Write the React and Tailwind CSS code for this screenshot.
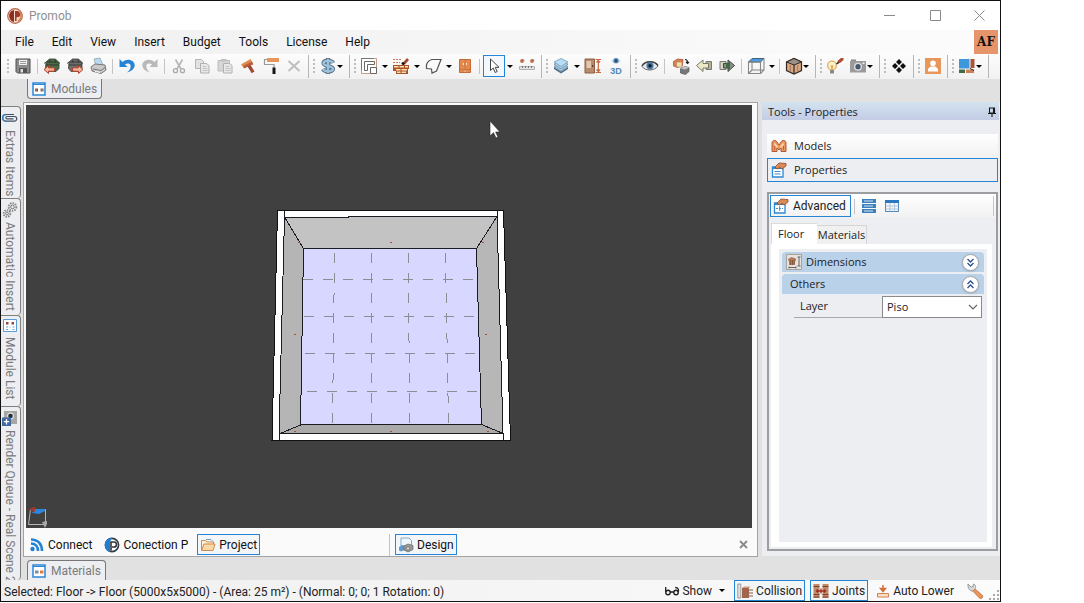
import React from "react";

/* ---------- icons ---------- */

function Svg({ size = "size-[18px]", box = 18, children, ...rest }) {
  return (
    <svg className={`${size} shrink-0`} viewBox={`0 0 ${box} ${box}`} fill="none" aria-hidden="true" {...rest}>
      {children}
    </svg>
  );
}

const Logo = () => (
  <Svg size="size-4" box={16}>
    <circle cx="8" cy="8" r="7.3" fill="#f6d9c6" stroke="#b8654a" strokeWidth="1.2" />
    <path d="M7 2C3 3 1.800 6 2.300 9c.4 3 2.500 4.700 4.700 5z" fill="#8c2f22" />
    <path d="M8 3h2.500c4 .5 4 6 0 6.300H9.500V13H8z" fill="#9a3c2b" />
    <path d="M12.500 3.500c2.500 3 2 7.500-1.500 9.500" stroke="#d98352" strokeWidth="1.500" />
  </Svg>
);
const Save = () => (
  <Svg>
    <path d="M2 2h14v14H3.500L2 14.500z" fill="#8b8b8b" stroke="#4f4f4f" />
    <path d="M4.500 2.500h9v6h-9z" fill="#efefef" stroke="#666" strokeWidth=".6" />
    <path d="M6 4.500h6M6 6.500h6" stroke="#999" />
    <path d="M5 11h8v5H5z" fill="#555" />
    <path d="M6.500 12h2.500v3.500H6.500z" fill="#ddd" />
  </Svg>
);
const Chest = ({ tone, dir }) => (
  <Svg>
    <path d="M3 5l3.500-3h6L16 5.500v6l-3 3H5l-2.500-3z" fill={tone} stroke="#3a403a" strokeWidth=".8" />
    <path d="M1 6.500l2-1.500M17 6.500L15 5M4 5h11M7 2.500l-.5 3M12 2.500l.5 3M3 8h13" stroke="#2a302a" strokeWidth=".8" />
    {dir === "left" ? (
      <path d="M1 12.500l4.500-4v2.300h6v3.400h-6v2.300z" fill="#f3b69a" stroke="#b2402a" />
    ) : (
      <path d="M17 12.500l-4.500-4v2.300h-6v3.400h6v2.300z" fill="#f3b69a" stroke="#b2402a" />
    )}
  </Svg>
);
const Printer = () => (
  <Svg>
    <path d="M5 2l6-1 3 7-7 1z" fill="#b9d9f3" stroke="#8aa" strokeWidth=".8" />
    <path d="M2 10l4-3 10 1 1 5-5 3.500L3 14z" fill="#c9c9c9" stroke="#777" />
    <path d="M4 12l8 1.500 4-3" stroke="#777" />
    <path d="M6 14.500l5 .8" stroke="#fff" />
  </Svg>
);
const Undo = () => (
  <Svg>
    <path d="M1.500 2v8h8L7 7.600C9 5.900 12 6.200 12.600 8.500c.5 2.500-1 5-3.600 7 4-.8 7.300-3.500 7.700-7C17 3.500 9.500.5 4.500 5z" fill="#2484d6" />
  </Svg>
);
const Redo = () => (
  <Svg>
    <path d="M16.500 2v8h-8L11 7.600C9 5.900 6 6.200 5.400 8.500c-.5 2.500 1 5 3.600 7-4-.8-7.300-3.500-7.700-7C1 3.500 8.500.5 13.500 5z" fill="#b9b9b9" />
  </Svg>
);
const Cut = () => (
  <Svg>
    <path d="M5.500 2.500L11 12M12.500 2.500L7 12" stroke="#b5b5b5" strokeWidth="1.600" />
    <circle cx="5.500" cy="13.700" r="2" stroke="#aaa" strokeWidth="1.300" />
    <circle cx="12.500" cy="13.700" r="2" stroke="#aaa" strokeWidth="1.300" />
  </Svg>
);
const Copy = () => (
  <Svg>
    <path d="M2.500 2.500h6l2 2v7h-8z" fill="#e2e2e2" stroke="#b5b5b5" />
    <path d="M7.500 6.500h6l2.500 2v7.500H7.500z" fill="#e8e8e8" stroke="#b0b0b0" />
    <path d="M9.500 9.500h4M9.500 11.500h5M9.500 13.500h5" stroke="#c4c4c4" />
  </Svg>
);
const Paste = () => (
  <Svg>
    <path d="M2 3.500h11.500V14H2z" fill="#d6d6d6" stroke="#bbb" />
    <path d="M5 2h5.500v2.500H5z" fill="#c2c2c2" />
    <path d="M7.500 6.500h6l2.500 2v7.500H7.500z" fill="#e8e8e8" stroke="#b0b0b0" />
    <path d="M9.500 9.500h4M9.500 11.500h5M9.500 13.500h5" stroke="#c4c4c4" />
  </Svg>
);
const Brush = () => (
  <Svg>
    <path d="M2 7.500L11.500 2l2.800 5.300L5 11z" fill="#e08a50" />
    <path d="M4 9l9-4.500 1.300 2.800L5 11.500z" fill="#b9603a" />
    <path d="M8.500 9.500l3-1.500 4 6.500-2.800 1.800z" fill="#9c4a30" />
  </Svg>
);
const Roller = () => (
  <Svg>
    <path d="M5 1h12v4H5z" fill="#e8965a" />
    <path d="M5 2.500H2.500v5H12V11" stroke="#9a9a9a" strokeWidth="1.200" />
    <path d="M10.500 10.500h3V17h-3z" fill="#151515" />
  </Svg>
);
const Cross = () => (
  <Svg>
    <path d="M3.500 4l11 10M14.500 4L3.500 14" stroke="#bfbfbf" strokeWidth="2" />
  </Svg>
);
const Dollar = () => (
  <Svg>
    <path d="M9 1v16" stroke="#5a7183" strokeWidth="4.400" />
    <path d="M14 6C13 3.200 4.500 3 4.500 6.200S14 8.800 14 12 5.500 15 4 12" stroke="#5a7183" strokeWidth="4.200" />
    <path d="M9 1.800v14.400" stroke="#9cc3e0" strokeWidth="2.400" />
    <path d="M14 6C13 3.200 4.500 3 4.500 6.200S14 8.800 14 12 5.500 15 4 12" stroke="#9cc3e0" strokeWidth="2.400" />
  </Svg>
);
const Walls = () => (
  <Svg>
    <path d="M1.500 1.500h15v15h-15z" fill="#fff" stroke="#c99a80" />
    <path d="M1.500 13V1.500h12" stroke="#777" />
    <path d="M4.500 13.500v-9h10v3H7.500v6z" fill="#fff" stroke="#666" />
    <path d="M10.500 10.500h6v6h-6z" fill="#fff" stroke="#666" />
  </Svg>
);
const Bricks = () => (
  <Svg>
    <path d="M1 8h16v4h-1v5H4v-3H1z" fill="#a9532d" />
    <path d="M2 9h4.500v1.500H2zM7.500 9H12v1.500H7.500zM13 9h3v1.500h-3zM4 12h4.500v1.500H4zM9.500 12H15v1.500H9.500zM5 14.500h3.500V16H5zM9.500 14.500H14V16H9.500z" fill="#ffe0ac" />
    <path d="M1 2.500h9M1 5.500h7" stroke="#c67a55" strokeDasharray="2 1" strokeWidth="1.200" />
    <path d="M11 8V5.500L15 1l2 2-4 4.500z" fill="#a34835" />
    <path d="M9.500 6.500h3M11 5v3" stroke="#111" strokeWidth="1.300" />
  </Svg>
);
const Shape = () => (
  <Svg>
    <path d="M8 2.500h9L12.500 14l-4.500 2-.5-4-5-.5C1.500 7 4 3.500 8 2.500z" fill="#fafafa" stroke="#555" strokeWidth="1.200" />
  </Svg>
);
const Cabinet = () => (
  <Svg>
    <path d="M3.500 2.500h11v13h-11z" fill="#e28a52" stroke="#c56a35" />
    <path d="M9 3v9M4 12.500h10" stroke="#c87038" strokeWidth=".8" />
    <path d="M7.500 6v2M10.500 6v2M9 13.700v1" stroke="#ffe9cc" />
  </Svg>
);
const Pointer = () => (
  <Svg>
    <path d="M5.500 2v11.500l2.700-2.500 2 4.500 2-1-2-4.200h3.800z" fill="#fff" stroke="#444" />
  </Svg>
);
const Measure = () => (
  <Svg>
    <circle cx="4" cy="4" r="1.900" fill="#c46a45" />
    <circle cx="14" cy="4" r="1.900" fill="#c46a45" />
    <path d="M5 2.500l1 1M15 2.500l1 1" stroke="#444" />
    <path d="M1.500 9.500h15v3h-15z" fill="#e3e3e3" stroke="#b0b0b0" />
    <path d="M4.500 9v2M7.500 9v2M10.500 9v2M13.500 9v2" stroke="#777" />
  </Svg>
);
const Layers = () => (
  <Svg>
    <path d="M2 12l7 4.500L16 12v-2l-7 4.500L2 10z" fill="#4f6f88" />
    <path d="M2 9.500L9 14l7-4.500-7-4z" fill="#a9cde6" stroke="#5d7f99" strokeWidth=".7" />
    <path d="M2 7.200l7 4.500 7-4.500-7-4z" fill="#b5d8ef" stroke="#5d7f99" strokeWidth=".7" />
    <path d="M2 5l7-3.500L16 5 9 9.500z" fill="#b9def7" stroke="#6f97b3" strokeWidth=".8" />
  </Svg>
);
const DoorSize = () => (
  <Svg>
    <path d="M1 2h9.500v14H1z" fill="#b88b6e" stroke="#8b5e45" />
    <path d="M2.500 4H7v7H2.500z" fill="#e3c8b0" />
    <path d="M8 8h1.200v2H8z" fill="#5c3a28" />
    <path d="M11.500 2.500h5.500M11.500 15.500h5.500M14.300 3v12M12.500 5.500l1.800-2 1.800 2M12.500 12.500l1.800 2 1.800-2" stroke="#c9683f" strokeWidth="1.200" />
  </Svg>
);
const View3D = () => (
  <Svg>
    <path d="M4 4C6 1 12 1 14 4 12 7 6 7 4 4z" fill="#cfe3f3" />
    <circle cx="9" cy="3.700" r="2.600" fill="#4c7fa8" />
    <circle cx="9" cy="3.700" r="1" fill="#16324a" />
    <text x="9" y="17" textAnchor="middle" fontSize="9" fontWeight="700" fontFamily="Liberation Sans, sans-serif" fill="#4d88b8">3D</text>
  </Svg>
);
const Eye = () => (
  <Svg>
    <path d="M1 9.500C4 3.500 13.500 3.500 17 9c-3.500 5-12.500 5.500-16 .5z" fill="#e8ecef" stroke="#666" />
    <path d="M1 9C4 3.500 13.500 3.500 17 8.500" stroke="#444" strokeWidth="1.500" />
    <circle cx="9" cy="8.800" r="3.600" fill="#4877a3" />
    <circle cx="9" cy="8.800" r="1.700" fill="#101c2b" />
  </Svg>
);
const Boxes = () => (
  <Svg>
    <path d="M1.500 4.500l4-2.500 5.500.5-.5 6-5 2-4-1.500z" fill="#d9814f" stroke="#9a4d2c" strokeWidth=".7" />
    <path d="M4.500 5h5.500v5H4.500z" fill="#f4dcb6" stroke="#b27a44" strokeWidth=".6" />
    <path d="M8.500 11.500l4.500-2 4 1v4l-3.500 3-5-1.500z" fill="#777" stroke="#555" strokeWidth=".7" />
    <path d="M8.500 11.500l4.500 1 4-2-4-1z" fill="#c4c4c4" />
    <path d="M13 2.500c2 0 2.500 1 2.500 3M14 5l1.500 1.500L17 5" stroke="#222" strokeWidth="1.200" />
  </Svg>
);
const ArrowBox = ({ dir }) =>
  dir === "left" ? (
    <Svg>
      <path d="M11 4.500h5.500v8H11z" fill="#b7b28f" stroke="#777" />
      <path d="M1.500 8.500L8 3v3.500h5.500v4.500H8v3.500z" fill="#eceac6" stroke="#77766a" />
    </Svg>
  ) : (
    <Svg>
      <path d="M2 4.500h6v8H2z" fill="#d6d6c4" stroke="#777" />
      <path d="M16.500 8.500L10 3v3.500H5.500v4.500H10v3.500z" fill="#8a8f88" stroke="#444" />
      <path d="M8 6l4-1v7l-2 1.500V11H8z" fill="#3f6b42" />
    </Svg>
  );
const WireCube = () => (
  <Svg>
    <path d="M5 1.500h12L13.500 5H1.500z" fill="#4a9be2" stroke="#47617a" />
    <path d="M1.500 5h12v11.500h-12zM17 2v11l-3.500 3.500M5 5v8h12M5 13l-3.500 3.500" stroke="#888" strokeWidth="1.100" />
  </Svg>
);
const WoodCube = () => (
  <Svg>
    <path d="M1.500 5L9 1.500 16.500 5v8.500L9 17l-7.500-3.500z" fill="#d9a983" stroke="#332b26" strokeWidth="1.200" />
    <path d="M1.500 5L9 8l7.500-3L9 1.500z" fill="#9c9189" stroke="#332b26" />
    <path d="M9 8v9" stroke="#332b26" strokeWidth="1.200" />
    <path d="M5.300 8v6M12.700 8v6" stroke="#a57453" />
  </Svg>
);
const Bulb = () => (
  <Svg>
    <circle cx="6" cy="8.500" r="4.300" fill="#fff3cf" stroke="#dcae5c" strokeWidth="1.300" />
    <path d="M4 13h4v3.500H4z" fill="#8a8a8a" />
    <path d="M5 8l1 4 1-4" stroke="#d9a24a" />
    <path d="M11 6.500l1-3L15 1h2.500v2L14 6z" fill="#ad4a32" />
    <path d="M10.500 7l2-1.500" stroke="#222" strokeWidth="1.500" />
  </Svg>
);
const Camera = () => (
  <Svg>
    <path d="M1 4h16v11.500H1z" fill="#9b9b9b" />
    <path d="M2 2.500h5V4H2z" fill="#888" />
    <circle cx="9" cy="9.700" r="4" fill="#d9dde0" />
    <circle cx="9" cy="9.700" r="2.600" fill="#44576b" />
    <path d="M13.500 5.500h2V7h-2z" fill="#eee" />
  </Svg>
);
const Diamonds = () => (
  <Svg>
    <path d="M9 2l3 3-3 3-3-3zM9 10l3 3-3 3-3-3zM5 6l3 3-3 3-3-3zM13 6l3 3-3 3-3-3z" fill="#111" />
  </Svg>
);
const UserTile = () => (
  <Svg>
    <path d="M1 1h16v16H1z" fill="#e8965a" />
    <circle cx="9" cy="6.300" r="2.800" fill="#fff" />
    <path d="M4 14.500V12l2.500-2.500h5L14 12v2.500z" fill="#fff" />
  </Svg>
);
const Blocks = () => (
  <Svg>
    <path d="M1 2h10.500v9.500H1z" fill="#3e96dc" />
    <path d="M12.500 2h4v9h-4z" fill="#a7553c" />
    <path d="M1 12.500h6V16H1z" fill="#3e6b46" />
    <path d="M8 12.500h8V16H8z" fill="#d17f57" />
    <path d="M12 11.500l4 2" stroke="#222" />
  </Svg>
);
const Clip = () => (
  <Svg size="size-4" box={16}>
    <path d="M12 4.500H4a3.300 3.300 0 000 6.600h8.500a2.300 2.300 0 000-4.600H5a1.100 1.100 0 000 2.300h6.500" stroke="#3f4f63" strokeWidth="1.200" />
    <path d="M4 4.500a3.300 3.300 0 000 6.600" stroke="#3d86c8" strokeWidth="1.400" />
  </Svg>
);
const Gears = () => (
  <Svg size="size-4" box={16}>
    <circle cx="10.500" cy="5" r="3.800" stroke="#8a8a8a" strokeWidth="2" strokeDasharray="1.500 1" />
    <circle cx="10.500" cy="5" r="1.800" stroke="#777" />
    <circle cx="5" cy="11.500" r="3.300" stroke="#8a8a8a" strokeWidth="2" strokeDasharray="1.500 1" />
    <circle cx="5" cy="11.500" r="1.400" stroke="#777" />
  </Svg>
);
const ModuleTile = () => (
  <Svg size="size-[14px]" box={14}>
    <path d="M1 1h12v12H1z" fill="#fff" stroke="#2d86d6" strokeWidth="1.500" />
    <path d="M1 2.500h12" stroke="#2d86d6" />
    <path d="M3 6.500h2v3H3zM8.500 6.500h2v3h-2z" fill="#9b6a4e" />
    <path d="M5 6.500h1v3H5zM10.500 6.500h1v3h-1z" fill="#555" />
  </Svg>
);
const ListTile = () => (
  <Svg size="size-[14px]" box={14}>
    <path d="M.5.5h13v12H.5z" fill="#fff" stroke="#5a9bd3" />
    <path d="M3 3h2.500v2.500H3zM8.500 3H11v2.500H8.500z" fill="#8a4a3c" />
    <path d="M3 8h2M6.500 8h1M9.500 8h2M3 10.500h2M9.500 10.500h2" stroke="#6ba3d6" strokeWidth="1" />
  </Svg>
);
const MaterialTile = () => (
  <Svg size="size-[14px]" box={14}>
    <path d="M1 1h12v12H1z" fill="#fff" stroke="#2d86d6" strokeWidth="1.500" />
    <path d="M1 2.500h12" stroke="#2d86d6" />
    <path d="M3 6.500h3.500v3H3z" fill="#7d8ea0" />
    <path d="M8 6.500h3.500v3H8z" fill="#e07a3f" />
  </Svg>
);
const RenderQueue = () => (
  <Svg size="size-4" box={16}>
    <path d="M2 1h13v13H2z" fill="#a6a6a6" />
    <circle cx="8.500" cy="6" r="3.600" fill="#dcdcdc" />
    <circle cx="8.500" cy="6" r="2.300" fill="#222f3d" />
    <path d="M0 7.500h9V16H0z" fill="#3f67a0" />
    <path d="M4.500 9v5.500M1.800 11.700h5.400" stroke="#fff" strokeWidth="1.300" />
  </Svg>
);
const Feed = () => (
  <Svg size="size-4" box={16}>
    <circle cx="3.500" cy="12" r="2.200" fill="#1f7fd4" />
    <path d="M2 6.500c4.500 0 7 3 7 7.500M2 2.500c7 0 11 4.500 11 11.500" stroke="#2484d6" strokeWidth="2.600" />
  </Svg>
);
const ConnP = () => (
  <Svg size="size-4" box={16}>
    <circle cx="8" cy="8" r="6.600" fill="#fff" stroke="#2f3b46" strokeWidth="1.600" />
    <path d="M8 .8C3.500.8.8 4.500.8 8S3.500 14.800 6 15V5z" fill="#1f7fd4" />
    <path d="M7 13.500V5h3c3.500.3 3.200 5 0 5H8" stroke="#333" strokeWidth="1.600" />
  </Svg>
);
const Folder = () => (
  <Svg size="size-4" box={16}>
    <path d="M1.500 13.500V3.500h4l1.500 1.500h6.500v3" fill="#fff0d8" stroke="#d08a4e" />
    <path d="M6 2.500h5l2 2" stroke="#6fa3cf" />
    <path d="M1.500 13.500L4 7h11l-2 6.500z" fill="#fbd9a7" stroke="#d08a4e" />
  </Svg>
);
const DesignIcon = () => (
  <Svg size="size-4" box={16}>
    <path d="M3 1h8l2.500 2.500V9H3z" fill="#eef5fb" stroke="#88a9c6" />
    <path d="M1 10l3-2 3 1v4l-4 1.500-2-1z" fill="#5f9bd0" />
    <path d="M6 9l4-2 5 1.500v4L10 15l-4-2z" fill="#9a9a9a" stroke="#666" strokeWidth=".7" />
    <circle cx="10" cy="11.500" r="1.700" fill="#e2e2e2" stroke="#555" strokeWidth=".7" />
  </Svg>
);
const ModelsIcon = () => (
  <Svg size="size-4" box={16}>
    <path d="M1 13.500V5c0-3 4-3.500 5-1l2 3 2-3c1-2.500 5-2 5 1v8.500h-5V10l-2 2-2-2v3.500z" fill="#ea9560" stroke="#b05a35" />
    <path d="M3.500 5.500l3 4M12.500 5.500l-3 4" stroke="#ffdca8" strokeWidth="1.500" />
    <path d="M3.500 12V8M12.500 12V8" stroke="#c56a40" />
  </Svg>
);
const PropsIcon = ({ grid }) => (
  <Svg size="size-4" box={16}>
    <path d="M1.500 5h10.500v10H1.500z" fill="#fff" stroke="#2f86d1" strokeWidth="1.300" />
    <path d="M1.500 6h10.500" stroke="#2f86d1" strokeWidth="2" />
    {grid ? <path d="M3 10.500h7M6.700 8v6" stroke="#4a8cc6" strokeDasharray="2 1" /> : <path d="M3.500 9.500h6M3.500 12h6" stroke="#4a8cc6" />}
    <path d="M4 5l4-4 7 .5V4l-4 3-2-1.500L6 7z" fill="#dc8a55" stroke="#8d4a2b" strokeWidth=".8" />
  </Svg>
);
const RowsIcon = () => (
  <Svg size="size-4" box={16}>
    <path d="M1 1h14v4H1zM1 6h14v4H1zM1 11h14v4H1z" fill="#3d7fbd" />
    <path d="M3 3h9M3 8h9M3 13h9" stroke="#d4e6f6" />
  </Svg>
);
const TableIcon = () => (
  <Svg size="size-4" box={16}>
    <path d="M1.500 2.500h13v11h-13z" fill="#eef5fb" stroke="#4d86b8" />
    <path d="M1 2h14v3H1z" fill="#2b78c2" />
    <path d="M1.500 8h13M1.500 11h13M6 5v8.500M10.500 5v8.500" stroke="#a7bfd3" strokeWidth=".8" />
  </Svg>
);
const DimIcon = () => (
  <Svg size="size-4" box={16}>
    <path d="M.5.5h15v15H.5z" fill="#e6e2de" stroke="#a9a29b" />
    <path d="M2 5l3.500-2L10 4.500v2l-1 .5v4H3V7l-1-.5z" fill="#b07c60" />
    <path d="M4.500 6v5M6.500 6v5M8.300 6v4" stroke="#7e4f35" strokeWidth=".8" />
    <path d="M11.500 3h3M11.500 12h3M13 3v9M3 13.500h7M3 12.500v2M10 12.500v2" stroke="#666" />
  </Svg>
);
const Pin = () => (
  <Svg size="size-[10px]" box={10}>
    <path d="M2.500 1h5v5h-5zM6.500 1v5M1 6.500h8M5 6.500V10" stroke="#1a1a1a" strokeWidth="1.100" />
  </Svg>
);
const Glasses = () => (
  <Svg size="size-4" box={16}>
    <circle cx="4" cy="9.500" r="2.200" stroke="#222" strokeWidth="1.400" />
    <circle cx="12" cy="9.500" r="2.200" stroke="#222" strokeWidth="1.400" />
    <path d="M6 9h4M1.700 9V4M14.200 9c.8-2 .3-4.500-3-4.500" stroke="#222" strokeWidth="1.300" />
  </Svg>
);
const CollisionIcon = () => (
  <Svg size="size-4" box={16}>
    <path d="M.8 1h3v14h-3z" fill="#e2e2e2" stroke="#888" strokeWidth=".8" />
    <path d="M5 5h7v10H5z" fill="#a3654c" />
    <path d="M5 5l2-1.500h6.500L12 5z" fill="#d59a76" />
    <path d="M12 7h4M12 10h4M12 13h4" stroke="#8a5a48" />
  </Svg>
);
const JointsIcon = () => (
  <Svg size="size-4" box={16}>
    <path d="M.5 1h6v14h-6zM9.500 1h6v14h-6z" fill="#c08a68" />
    <path d="M.5 3.500h6M.5 11.500h6M9.500 3.500h6M9.500 11.500h6M.5 14h6M9.500 14h6" stroke="#7c4028" />
    <path d="M4 8h8M8 5.500v5M5 6.500L3.500 8 5 9.500M11 6.500L12.500 8 11 9.500" stroke="#a32b1c" strokeWidth="1.300" />
  </Svg>
);
const LowerIcon = () => (
  <Svg size="size-[14px]" box={14}>
    <path d="M7 1v5M4.500 4.500L7 7.500l2.500-3z" stroke="#d0703c" fill="#e48a55" strokeWidth="1.500" />
    <path d="M1.500 9.500h11v3.500h-11z" fill="#fbe0c8" stroke="#d4814f" />
  </Svg>
);
const Wrench = () => (
  <Svg size="size-[18px]">
    <path d="M2 2l3 3 2-.5L7.500 2C10 3 10 6 8.800 7L7 9C4.500 9.500 1.500 7 2 2z" fill="#d8d8d8" stroke="#9b9b9b" />
    <path d="M7 9.300l2.200-2.200 7.300 6.400c1 1.800-1 3.700-2.800 2.800z" fill="#e8945a" stroke="#c46e3a" strokeWidth=".8" />
  </Svg>
);
const CaretDown = () => (
  <svg className="h-[3px] w-[6px] shrink-0" viewBox="0 0 6 3" aria-hidden="true">
    <path d="M0 0h6L3 3z" fill="#000" />
  </svg>
);

/* ---------- toolbar pieces ---------- */

const Grip = () => (
  <span className="flex w-[5px] shrink-0 flex-col items-center gap-[2px]">
    {[0, 1, 2, 3].map((i) => (
      <span key={i} className="size-[2px] bg-[#bdbdbd]" />
    ))}
  </span>
);
const Sep = ({ tall = false }) => (
  <span className="flex w-[6px] shrink-0 justify-center">
    <span className={tall ? "h-[23px] w-px bg-[#b5b5b5]" : "h-[15px] w-px bg-[#c4c4c4]"} />
  </span>
);
const Group = () => (
  <>
    <Sep tall />
    <Grip />
  </>
);
const Tool = ({ label, children }) => (
  <button type="button" aria-label={label} className="flex w-[23px] shrink-0 items-center justify-center">
    {children}
  </button>
);
const Drop = ({ label, wide = false, children }) => (
  <button
    type="button"
    aria-label={label}
    className={wide ? "flex w-8 shrink-0 items-center gap-1 pl-[3px]" : "flex w-[30px] shrink-0 items-center pl-[3px]"}
  >
    {children}
    <CaretDown />
  </button>
);

function Toolbar() {
  return (
    <div role="toolbar" aria-label="Main" className="flex h-[25px] items-center overflow-hidden bg-linear-to-b from-[#fdfdfd] to-[#f1f1f1] pb-px pl-[3px]">
      <span className="flex h-full w-[7px] items-center justify-center"><Grip /></span>
      <span className="flex h-full items-center">
        <Tool label="Save"><Save /></Tool>
        <Sep />
        <Tool label="Import"><Chest tone="#4a6b45" dir="left" /></Tool>
        <Tool label="Export"><Chest tone="#6d6d6d" dir="right" /></Tool>
        <Tool label="Print"><Printer /></Tool>
        <Sep />
        <Tool label="Undo"><Undo /></Tool>
        <Tool label="Redo"><Redo /></Tool>
        <Sep />
        <Tool label="Cut"><Cut /></Tool>
        <Tool label="Copy"><Copy /></Tool>
        <Tool label="Paste"><Paste /></Tool>
        <Tool label="Brush"><Brush /></Tool>
        <Tool label="Paint roller"><Roller /></Tool>
        <Tool label="Delete"><Cross /></Tool>
        <Group />
        <Drop label="Prices"><Dollar /></Drop>
        <Group />
        <Drop wide label="Walls"><Walls /></Drop>
        <Drop wide label="Masonry"><Bricks /></Drop>
        <Drop wide label="Geometry"><Shape /></Drop>
        <Tool label="Cabinet"><Cabinet /></Tool>
        <Sep />
      </span>
      <span className="flex h-full items-center pl-px">
        <button type="button" aria-label="Select" className="flex size-[22px] items-center justify-center border border-[#2484d6] bg-[#f3f8fc]">
          <Pointer />
        </button>
        <button type="button" aria-label="Select options" className="flex w-[10px] items-center justify-center"><CaretDown /></button>
        <Tool label="Measure"><Measure /></Tool>
        <Group />
        <Drop wide label="Layers"><Layers /></Drop>
        <Tool label="Door size"><DoorSize /></Tool>
        <Tool label="3D view"><View3D /></Tool>
        <Group />
        <Tool label="Visibility"><Eye /></Tool>
        <Sep />
      </span>
      <span className="flex h-full items-center pl-[2px]">
        <Tool label="Replace"><Boxes /></Tool>
        <Tool label="Previous"><ArrowBox dir="left" /></Tool>
        <Tool label="Next"><ArrowBox dir="right" /></Tool>
        <Sep />
        <Drop wide label="Views"><WireCube /></Drop>
        <Sep />
        <Drop label="Display mode"><WoodCube /></Drop>
        <Group />
        <Tool label="Lighting"><Bulb /></Tool>
        <Drop label="Camera"><Camera /></Drop>
        <Group />
        <Tool label="Components"><Diamonds /></Tool>
        <Group />
        <Tool label="Account"><UserTile /></Tool>
        <Group />
        <Drop label="Layout"><Blocks /></Drop>
        <Sep tall />
      </span>
    </div>
  );
}

/* ---------- page parts ---------- */

const MENU = ["File", "Edit", "View", "Insert", "Budget", "Tools", "License", "Help"];

function TitleBar() {
  return (
    <header className="flex h-[29px] items-center bg-white pl-[6px]">
      <Logo />
      <h1 className="pl-[6px] text-xs text-[#8f8f8f]">Promob</h1>
      <div className="ml-auto flex h-full text-[#8a8a8a]">
        <button type="button" aria-label="Minimize" className="flex w-[46px] items-center justify-center">
          <svg className="size-[11px]" viewBox="0 0 11 11" stroke="currentColor"><path d="M0 5.500h11" /></svg>
        </button>
        <button type="button" aria-label="Maximize" className="flex w-[46px] items-center justify-center">
          <svg className="size-[11px]" viewBox="0 0 11 11" fill="none" stroke="currentColor"><path d="M.5.5h10v10H.5z" /></svg>
        </button>
        <button type="button" aria-label="Close" className="flex w-[42px] items-center justify-center">
          <svg className="size-[11px]" viewBox="0 0 11 11" stroke="currentColor"><path d="M.5.5l10 10M10.500.5l-10 10" /></svg>
        </button>
      </div>
    </header>
  );
}

function MenuBar() {
  return (
    <nav className="flex h-6 items-center bg-linear-to-r from-[#f0f0f0] to-[#fcfcfc] pl-[14px] text-xs text-[#111]">
      <div className="flex gap-[18px]">
        {MENU.map((m) => (
          <button type="button" key={m}>{m}</button>
        ))}
      </div>
      <button type="button" className="mr-[2px] ml-auto flex size-6 items-center justify-center bg-[#e6946c] font-['DejaVu_Serif',serif] text-xs font-bold text-[#111]">
        AF
      </button>
    </nav>
  );
}

const SIDE_TABS = [
  { name: "Extras Items", icon: Clip, cls: "h-[92px]" },
  { name: "Automatic Insert", icon: Gears, cls: "h-[117px]" },
  { name: "Module List", icon: ListTile, cls: "h-[91px]" },
  { name: "Render Queue - Real Scene 2", icon: RenderQueue, cls: "flex-1" },
];

function SideTabs() {
  return (
    <div role="tablist" aria-orientation="vertical" className="flex w-5 shrink-0 flex-col pt-1">
      {SIDE_TABS.map(({ name, icon: Icon, cls }) => (
        <button
          type="button"
          role="tab"
          key={name}
          className={`${cls} flex min-h-0 flex-col items-center gap-1 rounded-r-sm border-t border-r border-[#808080] bg-[#eceef1] pt-[3px] pr-px text-xs text-[#7b7b7b]`}
        >
          <Icon />
          <span className="whitespace-nowrap [writing-mode:vertical-rl]">{name}</span>
        </button>
      ))}
    </div>
  );
}

function Scene() {
  const cols = [
    [334.5, 332.5],
    [371.5, 371.5],
    [408.5, 409.5],
    [445.5, 448.5],
  ];
  const rows = [
    [303, 476, 279.5],
    [304, 477, 316],
    [305, 479, 353.5],
    [307, 481, 391.5],
  ];
  const marks = [[390, 242], [298, 242], [482, 242], [294, 334], [485, 334], [390, 431], [294, 431], [487, 431]];
  return (
    <svg className="block h-full w-full" viewBox="26 105 726 423" role="img" aria-label="Room seen from above" shapeRendering="crispEdges">
      <path d="M277.500 210.500H503.500L510.500 440.500H272z" fill="#fff" stroke="#111" />
      <path d="M284.500 217L303.500 248.500H476.500L497 216.500H348V217z" fill="#c3c3c3" />
      <path d="M284.500 217L303.500 248.500L300.500 425L279 434z" fill="#b5b5b5" />
      <path d="M497 216.500L476.500 248.500L481.500 424.500L503 433.500z" fill="#b7b7b7" />
      <path d="M279 434L300.500 425L481.500 424.500L503 433.500z" fill="#a9a9a9" />
      <path d="M303.500 248.500H476.500L481.500 424.500L300.500 425z" fill="#d7d7ff" />
      <path
        d="M284.500 210.500V217H348V216.500H497V210.500M284.500 217L279 434V440M497 216L503 433V440M279 434L503 433.500M284.500 217L303.500 248.500M497 216.500L476.500 248.500M279 434L300.500 425M503 433.500L481.500 424.500M303.500 248.500H476.500L481.500 424.500L300.500 425z"
        fill="none"
        stroke="#1b1b22"
      />
      {cols.map(([a, b]) => (
        <line key={a} x1={a} y1="253" x2={b} y2="424" stroke="#8d8d96" strokeDasharray="10 10" />
      ))}
      {rows.map(([a, b, y]) => (
        <line key={y} x1={a} y1={y} x2={b} y2={y} stroke="#8d8d96" strokeDasharray="10 10" />
      ))}
      {marks.map(([x, y]) => (
        <rect key={`${x}-${y}`} x={x} y={y} width="2" height="1" fill="#b5482f" />
      ))}
      <path d="M490 121v15l3.500-3.300 2.500 5.300 2-1-2.300-5h4.300z" fill="#fff" stroke="#222" strokeWidth=".6" shapeRendering="auto" />
    </svg>
  );
}

const barButton = "flex h-[21px] items-center gap-[3px] px-[3px]";
const barActive = "flex h-[21px] items-center gap-[3px] border border-[#2484d6] px-[2px] bg-[#f3f6f9]";

function Workspace() {
  return (
    <main className="flex min-w-0 flex-1 flex-col">
      <section className="flex min-h-0 flex-1 flex-col border border-[#a3a3a3] bg-[#fafafa] pt-[2px] pl-[2px]">
        <div className="relative mr-[5px] min-h-0 flex-1 bg-[#404040]">
          <Scene />
          <svg className="absolute bottom-0 left-[2px] size-[22px]" viewBox="0 0 22 22" fill="none" aria-hidden="true">
            <path d="M2.500 3.500h15v15h-17z" stroke="#b5b5b5" />
            <path d="M4 7l3-4h10v2l-6 3z" fill="#2b86dc" />
            <path d="M0 3.500L7 .5v5.500z" fill="#9b3a32" />
            <path d="M14 16l5-1v3l-2 4z" fill="#a9a9a9" />
          </svg>
        </div>
        <div className="flex h-[28px] items-center pt-[5px] pr-[9px] text-xs text-[#111]">
          <div className="flex w-[363px] items-center gap-[6px]">
            <button type="button" className={barButton}><Feed />Connect</button>
            <button type="button" className={barButton}><ConnP />Conection P</button>
            <button type="button" className={barActive}><Folder />Project</button>
          </div>
          <span className="mr-[5px] h-[22px] w-px bg-[#c4c4c4]" />
          <button type="button" className={barActive}><DesignIcon />Design</button>
          <button type="button" aria-label="Close panel" className="ml-auto flex items-center">
            <svg className="size-[9px]" viewBox="0 0 9 9" stroke="#8c8c8c" strokeWidth="2"><path d="M1 1l7 7M8 1L1 8" /></svg>
          </button>
        </div>
      </section>
      <div className="pt-[3px] pl-1">
        <button type="button" className="flex h-5 items-center gap-[5px] rounded-t-sm border border-b-0 border-[#777] bg-[#eceef1] px-1 text-xs text-[#7b7b7b]">
          <MaterialTile />
          Materials
        </button>
      </div>
    </main>
  );
}

const Chevrons = ({ up = false }) => (
  <span className="flex size-[17px] items-center justify-center rounded-full border border-[#a5a5a5] bg-white shadow-sm">
    <svg className="size-[9px]" viewBox="0 0 9 9" fill="none" stroke="#2d4f86" strokeWidth="1.300">
      {up ? <path d="M1.500 4l3-3 3 3M1.500 8l3-3 3 3" /> : <path d="M1.500 1l3 3 3-3M1.500 5l3 3 3-3" />}
    </svg>
  </span>
);

function ToolsPanel() {
  return (
    <aside className="mb-6 ml-[2px] flex w-[238px] shrink-0 flex-col bg-[#eceef1] pr-px font-['Open_Sans','Noto_Sans',sans-serif] text-[11px] text-[#222]">
      <h2 className="flex h-[18px] items-center justify-between bg-linear-to-b from-[#d3e3ef] to-[#c3cce5] pt-[2px] pr-[2px] pl-[6px]">
        Tools - Properties
        <button type="button" aria-label="Pin panel"><Pin /></button>
      </h2>
      <div className="mt-[14px] mr-px ml-[5px]">
        <button type="button" className="flex h-6 w-full items-center gap-[7px] bg-linear-to-b from-white to-[#f1f1f1] pl-1">
          <ModelsIcon />Models
        </button>
        <button type="button" className="flex h-6 w-full items-center gap-[7px] border border-[#2484d6] pl-[3px]">
          <PropsIcon />Properties
        </button>
      </div>
      <div className="mt-[10px] mr-px mb-[5px] ml-[5px] flex min-h-0 flex-1 flex-col border-2 border-[#9b9da0] pb-[2px] pl-px">
        <div className="flex h-6 items-center bg-linear-to-b from-white to-[#f1f1f1] pr-[2px]">
          <button type="button" className="flex h-[22px] items-center gap-1 border border-[#2484d6] px-[2px] pr-[4px] font-[Roboto,sans-serif] text-xs">
            <PropsIcon grid />Advanced
          </button>
          <span className="mx-[3px] h-[15px] w-px bg-[#c4c4c4]" />
          <button type="button" aria-label="List view" className="flex w-[23px] justify-center"><RowsIcon /></button>
          <button type="button" aria-label="Table view" className="flex w-[23px] justify-center"><TableIcon /></button>
          <span className="ml-auto h-5 w-px bg-[#c4c4c4]" />
        </div>
        <div role="tablist" className="flex items-end pt-[5px] pl-px">
          <button type="button" role="tab" aria-selected="true" className="h-[21px] w-[46px] border-t border-l border-[#dcdcdc] bg-white pl-[6px] text-left">Floor</button>
          <button type="button" role="tab" aria-selected="false" className="h-[19px] w-[50px] border-t border-r border-[#d5d5d5] bg-[#f0f0f0] text-center">Materials</button>
        </div>
        <div className="mr-1 ml-px flex min-h-0 flex-1 flex-col bg-white pt-[5px] pr-[5px] pb-[5px] pl-2">
          <div className="flex min-h-0 flex-1 flex-col gap-[2px] bg-[#eceef1] px-[3px] pt-[3px]">
            <button type="button" className="flex h-5 shrink-0 items-center rounded-t-sm bg-[#b9d1e9] pr-[5px] pl-1">
              <DimIcon />
              <span className="pl-1">Dimensions</span>
              <span className="ml-auto"><Chevrons /></span>
            </button>
            <button type="button" className="flex h-5 shrink-0 items-center rounded-t-sm bg-[#b9d1e9] pr-[5px] pl-2">
              Others
              <span className="ml-auto"><Chevrons up /></span>
            </button>
            <div className="flex h-[22px] items-center pr-[2px] pl-3">
              <label htmlFor="layer" className="flex h-full flex-1 items-center border-b border-[#a8a8a8] pl-[6px]">Layer</label>
              <span className="relative flex w-[100px]">
                <select id="layer" defaultValue="Piso" className="h-[22px] w-full appearance-none border border-[#8a8a8a] bg-white pl-1 text-[11px]">
                  <option>Piso</option>
                </select>
                <svg className="pointer-events-none absolute top-2 right-1 h-[6px] w-[10px]" viewBox="0 0 10 6" fill="none" stroke="#666" strokeWidth="1.200"><path d="M1 1l4 4 4-4" /></svg>
              </span>
            </div>
          </div>
        </div>
      </div>
    </aside>
  );
}

function StatusBar() {
  return (
    <footer className="flex h-[21px] items-center bg-linear-to-r from-[#efefef] to-[#fbfbfb] pl-[3px] text-xs text-[#222]">
      <p className="pt-[2px] whitespace-nowrap">Selected: Floor -&gt; Floor (5000x5x5000) - (Area: 25 m²) - (Normal: 0; 0; 1 Rotation: 0)</p>
      <div className="ml-auto flex h-full items-center gap-[5px]">
        <button type="button" className="flex items-center gap-[2px] pr-1"><Glasses />Show<span className="pl-[5px]"><CaretDown /></span></button>
        <button type="button" className={barActive}><CollisionIcon />Collision</button>
        <button type="button" className={barActive}><JointsIcon />Joints</button>
        <button type="button" className="flex items-center gap-[3px] px-[3px]"><LowerIcon />Auto Lower</button>
        <button type="button" aria-label="Settings" className="pl-1"><Wrench /></button>
        <svg className="size-[11px] self-end" viewBox="0 0 11 11" fill="#a9a9a9" aria-hidden="true">
          <path d="M8 0h2v2H8zM4 4h2v2H4zM8 4h2v2H8zM0 8h2v2H0zM4 8h2v2H4zM8 8h2v2H8z" />
        </svg>
      </div>
    </footer>
  );
}

export default function App() {
  return (
    <div className="flex h-screen bg-white pr-[83px] font-[Roboto,'Open_Sans',sans-serif]">
      <div className="mb-px flex min-w-0 flex-1 flex-col border border-[#111] bg-[#e1e1e1]">
        <TitleBar />
        <MenuBar />
        <Toolbar />
        <div className="h-[23px] pl-[26px]">
          <button type="button" className="flex h-5 items-center gap-[5px] rounded-b-sm border border-t-0 border-[#777] bg-[#eceef1] px-1 text-xs text-[#7b7b7b]">
            <ModuleTile />
            Modules
          </button>
        </div>
        <div className="flex min-h-0 flex-1 gap-[2px]">
          <SideTabs />
          <Workspace />
          <ToolsPanel />
        </div>
        <StatusBar />
      </div>
    </div>
  );
}
